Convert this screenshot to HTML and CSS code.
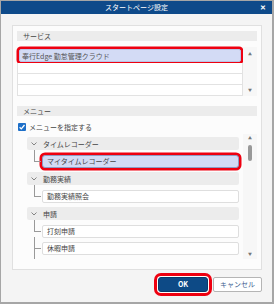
FILE: index.html
```html
<!DOCTYPE html>
<html lang="ja">
<head>
    <meta charset="UTF-8">
    <title>スタートページ設定</title>
    <link rel="stylesheet" href="styles.css">
</head>
<body>
    <div class="dialog">
        <div class="titlebar">
            <span class="title">スタートページ設定</span>
            <span class="close">✕</span>
        </div>
        <div class="dialog-body">
            <div class="panel">
                <div class="section-head">サービス</div>
                <div class="service">
                    <ul class="service-list">
                        <li class="row selected">奉行Edge 勤怠管理クラウド</li>
                        <li class="row"></li>
                        <li class="row"></li>
                        <li class="row"></li>
                    </ul>
                    <div class="scroll service-scroll">
                        <span class="arrow">▲</span>
                        <span class="arrow">▼</span>
                    </div>
                </div>

                <div class="section-head menu-head">メニュー</div>
                <label class="check">
                    <span class="box">
                        <svg width="8" height="8" viewBox="0 0 8 8"><path d="M1.6 4.2 L3.3 5.9 L6.5 2" fill="none" stroke="#fff" stroke-width="1.3"/></svg>
                    </span>
                    メニューを指定する
                </label>

                <div class="tree">
                    <div class="tree-items">
                        <div class="group">
                            <svg class="chev" width="6" height="4" viewBox="0 0 6 4"><path d="M0.5 0.5 L3 3 L5.5 0.5" fill="none" stroke="#777" stroke-width="0.9"/></svg>
                            タイムレコーダー
                        </div>
                        <div class="child selected">マイタイムレコーダー</div>
                        <div class="group">
                            <svg class="chev" width="6" height="4" viewBox="0 0 6 4"><path d="M0.5 0.5 L3 3 L5.5 0.5" fill="none" stroke="#777" stroke-width="0.9"/></svg>
                            勤務実績
                        </div>
                        <div class="child">勤務実績照会</div>
                        <div class="group">
                            <svg class="chev" width="6" height="4" viewBox="0 0 6 4"><path d="M0.5 0.5 L3 3 L5.5 0.5" fill="none" stroke="#777" stroke-width="0.9"/></svg>
                            申請
                        </div>
                        <div class="child">打刻申請</div>
                        <div class="child more">休暇申請</div>
                    </div>
                    <div class="scroll tree-scroll">
                        <span class="arrow">▲</span>
                        <span class="thumb"></span>
                        <span class="spacer"></span>
                        <span class="arrow">▼</span>
                    </div>
                </div>
            </div>

            <div class="buttons">
                <button class="btn ok">OK</button>
                <button class="btn cancel">キャンセル</button>
            </div>
        </div>
    </div>
</body>
</html>
```

FILE: styles.css
```css
html, body {
    margin: 0;
    height: 304px;
    overflow: hidden;
}
body {
    background-color: #a6a6a6;
    font-family: "Noto Sans CJK JP", "Noto Sans", sans-serif;
    font-size: 7px;
    color: #444;
}
.dialog {
    margin: 1px 2px 0 1px;
    width: 271px;
    height: 301px;
    background-color: #f4f4f4;
}
.titlebar {
    height: 13px;
    background-color: #0e4a8a;
    color: #fff;
    display: flex;
    align-items: center;
    justify-content: center;
    position: relative;
    line-height: 13px;
}
.title {
    font-size: 7px;
}
.close {
    position: absolute;
    right: 6px;
    top: 0;
    font-size: 7px;
    font-weight: bold;
}
.dialog-body {
    padding: 11px 10px 0 11px;
}
.panel {
    box-sizing: border-box;
    height: 245px;
    background-color: #fcfcfc;
    border: 1px solid #e0e0e0;
    padding: 5px 4px 0 4px;
}
.section-head {
    height: 10px;
    line-height: 10px;
    background-color: #ececec;
    padding-left: 6px;
    color: #444;
}
.service {
    margin-top: 6px;
    display: flex;
}
.service-list {
    list-style: none;
    margin: 0;
    padding: 0;
    width: 226px;
}
.row {
    box-sizing: border-box;
    height: 11px;
    background-color: #fff;
    border: 1px solid #e2e2e2;
    border-top: none;
}
.row.selected {
    height: 13px;
    margin: 2px 2px 1px;
    line-height: 12px;
    padding-left: 2px;
    border: 1px solid #b9c4e6;
    background-color: #d3dbf5;
    border-radius: 2px;
    box-shadow: 0 0 0 2.5px #ee0010;
    color: #555;
}
.scroll {
    display: flex;
    flex-direction: column;
    align-items: center;
    width: 14px;
    background-color: #f7f7f7;
}
.arrow {
    font-size: 4px;
    color: #777;
    line-height: 5px;
}
.service-scroll {
    height: 49px;
    justify-content: space-between;
    padding: 5px 0 3px;
    box-sizing: border-box;
}
.menu-head {
    margin-top: 10px;
}
.check {
    margin-top: 6px;
    height: 9px;
    display: flex;
    align-items: center;
    gap: 3px;
    padding-left: 1px;
    color: #444;
}
.box {
    width: 8px;
    height: 8px;
    background-color: #1d6fc8;
    border-radius: 1px;
    display: flex;
}
.tree {
    margin-top: 3px;
    height: 125px;
    overflow: hidden;
    display: flex;
}
.tree-items {
    width: 213px;
    margin-left: 10px;
    padding-top: 3px;
    display: flex;
    flex-direction: column;
    gap: 4.5px;
}
.group {
    flex: none;
    box-sizing: border-box;
    height: 13px;
    background-color: #ececec;
    border-radius: 2px;
    padding-left: 4px;
    display: flex;
    align-items: center;
    gap: 6px;
    color: #444;
}
.chev {
    flex: none;
}
.child {
    flex: none;
    box-sizing: border-box;
    position: relative;
    height: 13px;
    margin-left: 15px;
    background-color: #fff;
    border: 1px solid #dedede;
    border-radius: 2px;
    padding-left: 4px;
    line-height: 11px;
    color: #444;
}
.child::before {
    content: "";
    position: absolute;
    left: -9px;
    top: -6px;
    width: 6px;
    height: 11px;
    border-left: 1px solid #999;
    border-bottom: 1px solid #999;
}
.child.more::after {
    content: "";
    position: absolute;
    left: -9px;
    top: 5px;
    height: 14px;
    border-left: 1px solid #999;
}
.child.selected {
    background-color: #d3dbf5;
    border-color: #8d9cc4;
    box-shadow: 0 0 0 2.5px #ee0010;
    border-radius: 3px;
}
.tree-scroll {
    margin-left: 4px;
    padding: 2px 0 2px;
    box-sizing: border-box;
    height: 125px;
    background-color: #f7f7f7;
}
.thumb {
    margin-top: 4px;
    width: 4px;
    height: 16px;
    border-radius: 2px;
    background-color: #999;
}
.spacer {
    flex: 1;
}
.buttons {
    margin-top: 7px;
    display: flex;
    justify-content: flex-end;
    gap: 5px;
}
.btn {
    box-sizing: border-box;
    height: 15px;
    padding: 0;
    font-family: "Noto Sans CJK JP", "Noto Sans", sans-serif;
    font-size: 7px;
    border-radius: 2px;
    line-height: 13px;
}
.ok {
    width: 50px;
    background-color: #0d4a86;
    border: 1px solid #0a3a6a;
    color: #fff;
    font-weight: bold;
    box-shadow: 0 0 0 1px #fff, 0 0 0 4px #ee0010;
    border-radius: 3px;
}
.cancel {
    width: 49px;
    background-color: #fff;
    border: 1px solid #b5b5b5;
    color: #3d5f91;
}
```
